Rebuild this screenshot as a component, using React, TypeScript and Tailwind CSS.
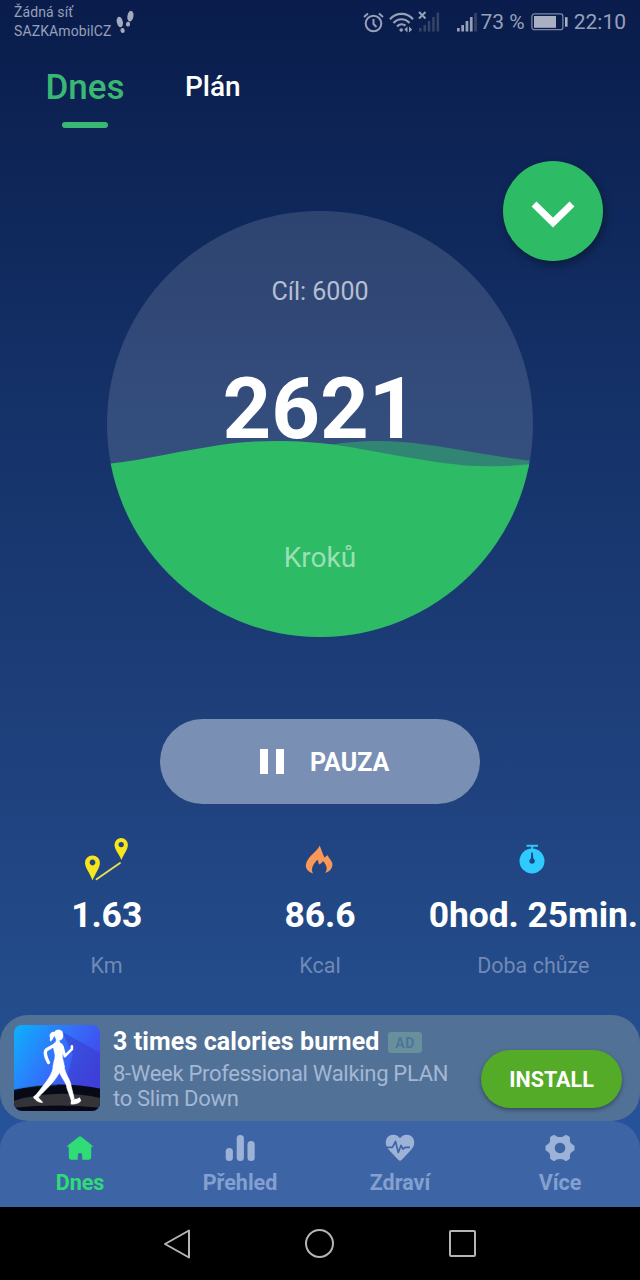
import React from 'react';

const StatusBar = () => {
  return (
    <header className="h-11 pl-[14px] pr-[14px] flex justify-between text-[#97a0b9]">
      <div className="flex pt-[3px]">
        <div className="text-[14px] leading-[19px] tracking-[0.1px]">
          <p>Žádná síť</p>
          <p>SAZKAmobilCZ</p>
        </div>
        <svg width="18" height="24" viewBox="0 0 18 24" fill="#a3abbf" className="ml-[5px] mt-[7px]">
          <ellipse cx="3.8" cy="12" rx="3" ry="5.4" transform="rotate(-12 3.8 12)" />
          <ellipse cx="6.600" cy="20.5" rx="2.1" ry="2.500" transform="rotate(-14 6.6 20.5)" />
          <ellipse cx="14.4" cy="6.200" rx="3" ry="5.4" transform="rotate(10 14.4 6.2)" />
          <ellipse cx="12" cy="14.2" rx="2.1" ry="2.4" transform="rotate(14 12 14.2)" />
        </svg>
      </div>

      <div className="flex items-center text-[21px] leading-none">
        <svg width="21" height="21" viewBox="0 0 21 21" fill="none" stroke="currentColor" strokeWidth="2">
          <circle cx="10.5" cy="11.5" r="7.8" />
          <path d="M10.5 7v5l3 3M1 5l4-3.5M20 5l-4-3.5" />
        </svg>
        <svg width="25" height="21" viewBox="0 0 25 21" fill="none" stroke="currentColor" strokeWidth="2.2" className="ml-[5px]">
          <path d="M1 7.2C7 .2 18 .2 24 7.2M4.5 11c4.5-5 11.5-5 16 0M8 14.5c2.500-2.800 6-2.800 8.500-.8" />
          <circle cx="12.2" cy="18" r="1.8" fill="currentColor" stroke="none" />
          <path d="M18.5 14.5l-3.2 3 3.2 3zM20 14.5l3.2 3-3.2 3z" fill="currentColor" stroke="none" />
        </svg>
        <svg width="22" height="22" viewBox="0 0 22 22" className="ml-[4px]">
          <g fill="#354366">
            <rect x="1" y="17" width="2.5" height="3.5" />
            <rect x="5.5" y="14" width="2.5" height="6.5" />
            <rect x="9.8" y="10" width="2.5" height="10.5" />
            <rect x="14.2" y="6" width="2.5" height="14.5" />
            <rect x="18.6" y="1.5" width="2.5" height="19" />
          </g>
          <path d="M1 1l6.5 6.5M7.500 1L1 7.5" stroke="currentColor" strokeWidth="2" />
        </svg>
        <svg width="22" height="22" viewBox="0 0 22 22" fill="currentColor" className="ml-[16px]">
          <rect x="1" y="17" width="2.7" height="3.5" />
          <rect x="5.3" y="14" width="2.7" height="6.5" />
          <rect x="9.6" y="10" width="2.7" height="10.5" />
          <rect x="13.9" y="6" width="2.7" height="14.5" />
          <rect x="18.2" y="2" width="2.7" height="18.5" fill="#354366" />
        </svg>
        <span className="ml-[3px] whitespace-nowrap">73 %</span>
        <svg width="37" height="18" viewBox="0 0 37 18" className="ml-[6px]">
          <rect x="0.9" y="0.9" width="31" height="15.8" rx="2.5" fill="none" stroke="#7c86a3" strokeWidth="1.3" />
          <rect x="3" y="3" width="22" height="11.8" fill="#a9b0c4" />
          <rect x="34" y="4.2" width="2.6" height="9.5" fill="#a9b0c4" />
        </svg>
        <span className="ml-[6px]">22:10</span>
      </div>
    </header>
  );
};

const Goal = () => {
  return (
    <div className="relative w-[426px] h-[426px] mx-auto rounded-full overflow-hidden bg-white/13">
      <svg width="426" height="426" viewBox="0 0 426 426" className="absolute inset-0">
        <path
          d="M190 242C222 232 245 230 275 230C325 231 365 243 426 250V258H190Z"
          fill="#2cbd66"
          fillOpacity="0.5"
        />
        <path
          d="M0 253C38 249 72 240 113 234C132 231 150 230 170 230C192 230 208 231.500 226 233.500C249 236.500 270 241 293 245C320 249.500 348 255 380 255.300C395 255.300 410 255 426 252.500V426H0Z"
          fill="#2dbb65"
        />
      </svg>
      <div className="relative flex flex-col items-center">
        <p className="mt-[66px] text-[25px] leading-[30px] text-[#b6bfd0]">Cíl: 6000</p>
        <p className="mt-[52px] text-[85px] leading-[100px] font-bold text-white">2621</p>
        <p className="mt-[82px] text-[28px] leading-[34px] text-[#9bdfb6]">Kroků</p>
      </div>
    </div>
  );
};

const RouteIcon = () => (
  <svg width="46" height="46" viewBox="0 0 46 46" fill="#f8e51c" className="mr-[2px]">
    <path
      fillRule="evenodd"
      d="M9.5 18.5a7.3 7.3 0 0 1 7.4 7.3C16.9 31 12 37 9.5 43.5C7.5 37 2 31 2 25.8a7.3 7.3 0 0 1 7.5-7.3zM9.5 22.6a2.9 2.9 0 1 0 .01 0z"
    />
    <path
      fillRule="evenodd"
      d="M38.2 1a6.7 6.7 0 0 1 6.7 6.7C44.9 12.5 40.5 17.5 38.4 23C36.5 17.5 31.5 12.5 31.5 7.7A6.7 6.7 0 0 1 38.2 1zM38.2 4.9a2.7 2.7 0 1 0 .01 0z"
    />
    <path d="M13.5 42.3L37 26" stroke="#eee053" strokeWidth="1.8" strokeLinecap="round" />
  </svg>
);

const FlameIcon = () => (
  <svg width="28" height="29" viewBox="0 0 28 29" fill="#fb9758" className="mr-[2px] mb-[2px]">
    <path d="M14.5 0.5C13.5 6 2 11 .8 20C.5 23.5 3 27 8 28.5C5.8 24 7.5 20 12.3 14.8C13.5 16 13.3 18 14 19.5C15.5 19.4 17 17.5 18 16C22.5 21 22.5 24.5 20.2 28C25 26.5 28 22.5 27.3 18.5C27 15.5 23.8 13.5 22.8 10.2C21.3 10.7 20.5 11.7 19.7 12.8C17.5 9 16.8 5 14.5.5z" />
  </svg>
);

const WatchIcon = () => (
  <svg width="26" height="30" viewBox="0 0 26 30" className="mr-[2px] mb-[2px]">
    <path d="M7.5 1.7h11.5M13.2 1v5" stroke="#31c5fa" strokeWidth="2" />
    <circle cx="13" cy="17" r="12.5" fill="#2fcbff" />
    <path d="M12.300 8.500h1.600l.4 6a2.800 2.800 0 1 1-2.400 0z" fill="#1e4686" />
  </svg>
);

const stats = [
  { value: '1.63', label: 'Km', icon: <RouteIcon /> },
  { value: '86.6', label: 'Kcal', icon: <FlameIcon /> },
  { value: '0hod. 25min.', label: 'Doba chůze', icon: <WatchIcon /> },
];

const Walker = () => (
  <svg width="86" height="86" viewBox="42 62 257 257" className="rounded-[8px] shrink-0">
    <defs>
      <linearGradient id="sky" x1="0" y1="0" x2="1" y2="0.6">
        <stop offset="0" stopColor="#0cb1fd" />
        <stop offset="0.55" stopColor="#356dfa" />
        <stop offset="1" stopColor="#4440e8" />
      </linearGradient>
    </defs>
    <rect x="42" y="62" width="257" height="257" fill="url(#sky)" />
    <path d="M186 82L299 145V260H190L218 150z" fill="#3b3dcb" fillOpacity="0.55" />
    <path d="M42 255Q170 226 299 252V319H42z" fill="#070a16" />
    <path d="M42 288Q170 252 299 280V309Q170 296 42 309z" fill="#333338" />
    <path d="M42 255Q100 241 170 241" fill="none" stroke="#147cd8" strokeWidth="2" />
    <g fill="#fff" stroke="#fff" strokeLinecap="round" strokeLinejoin="round">
      <path d="M164 83C164 74 188 73 188 88C190 98 187 107 178 107L179 115C189 118 191 127 190 136L187 153C186 163 193 173 192 187L160 187C157 175 166 163 164 150L158 123C160 115 169 115 168 105C164 99 163 92 164 83z" strokeWidth="1" />
      <path d="M166 84C158 78 145 88 149 98C151 103 147 107 151 111C160 108 157 100 166 93z" strokeWidth="0" />
      <path d="M163 122L139 136C132 142 137 160 145 174" fill="none" strokeWidth="10" />
      <path d="M187 128L194 155L215 134M215 134L215 126" fill="none" strokeWidth="8" />
      <path d="M159 183C160 207 140 230 106 273L114 279C137 254 160 236 178 204C188 226 200 237 200 250L213 286L222 282L213 246C211 223 193 210 192 183z" strokeWidth="2" />
      <path d="M106 272C98 276 99 280 105 284C110 291 118 294 128 294C129 291 119 286 115 278zM213 283L212 296C211 301 216 299 220 299C230 298 242 293 242 287L238 279C231 284 224 285 213 283z" strokeWidth="1" />
    </g>
  </svg>
);

const AdBanner = () => {
  return (
    <div className="h-[106px] rounded-[28px] bg-[#517197] flex items-center pl-[14px] pr-[18px]">
      <Walker />
      <div className="ml-[13px] flex-1 whitespace-nowrap self-start pt-[12px]">
        <div className="flex items-center h-[30px]">
          <h3 className="w-[267px] font-bold text-[25px] leading-[30px] tracking-[0.1px] text-white">3 times calories burned</h3>
          <span className="ml-[8px] w-[34px] h-[21px] rounded-[3px] bg-[#67909c] text-[#4f7598] text-[14px] leading-[22px] font-bold text-center tracking-[0.5px]">
            AD
          </span>
        </div>
        <p className="mt-[4px] text-[22px] leading-[25px] tracking-[-0.3px] text-[#a3b7d5]">
          8-Week Professional Walking PLAN
          <br />
          to Slim Down
        </p>
      </div>
      <button className="mt-[22px] pt-[2px] w-[141px] h-[58px] shrink-0 rounded-full bg-[#54ab27] text-white text-[21.5px] font-bold shadow-[0_2px_4px_rgba(0,0,0,0.35)]">
        INSTALL
      </button>
    </div>
  );
};

const navItems = [
  {
    label: 'Dnes',
    icon: (
      <svg width="28" height="28" viewBox="0 0 28 28" fill="currentColor">
        <path d="M12.8 2.7Q14 1.7 15.2 2.7L26.3 11.5Q27.4 13 25.5 13.3H25.2V22.8Q25.2 25.7 22.5 25.7H16.2V21Q16 19 14 19Q12 19 11.8 21V25.7H5.5Q2.8 25.7 2.8 22.8V13.3H2.5Q.6 13 1.7 11.5z" />
      </svg>
    ),
  },
  {
    label: 'Přehled',
    icon: (
      <svg width="30" height="28" viewBox="0 0 30 28" fill="currentColor">
        <rect x="0.7" y="14" width="7.2" height="13" rx="3.5" />
        <rect x="11.7" y="1" width="7.2" height="26" rx="3.5" />
        <rect x="22.5" y="7" width="7.2" height="20" rx="3.5" />
      </svg>
    ),
  },
  {
    label: 'Zdraví',
    icon: (
      <svg width="30" height="28" viewBox="0 0 30 28">
        <path d="M15 4.2C18.5-.5 25-.3 28 4C30.5 8.5 29 13 25.5 16.5L16.8 25.8Q15 27.7 13.2 25.8L4.5 16.5C1 13-.5 8.5 2 4C5-.3 11.5-.5 15 4.2z" fill="currentColor" />
        <path d="M1 13.3H7.5L10.5 7.5L13.3 18.5L16 11.5L18 15.2L20 13.3H25" fill="none" stroke="#3d65a5" strokeWidth="1.7" strokeLinejoin="round" />
      </svg>
    ),
  },
  {
    label: 'Více',
    icon: (
      <svg width="30" height="28" viewBox="0 0 30 28" fill="currentColor">
        <path
          fillRule="evenodd"
          d="M8.5 1Q10 .7 11.2 2.2Q15 4 18.8 2.2Q20 .7 21.5 1L24.500 2.800Q25.500 4 24.800 6Q25.300 9.800 28 10.700Q29.500 11.300 29.500 12.500V15.500Q29.500 16.700 28 17.300Q25.300 18.200 24.800 22Q25.500 24 24.500 25L21.500 27Q20 27.300 18.800 25.800Q15 24 11.200 25.800Q10 27.300 8.500 27L5.500 25Q4.500 24 5.200 22Q4.700 18.200 2 17.300Q.5 16.700.5 15.500V12.500Q.5 11.300 2 10.700Q4.700 9.800 5.200 6Q4.500 4 5.500 2.800zM15 8.700a5.300 5.300 0 1 0 .01 0z"
        />
      </svg>
    ),
  },
];

const App = () => {
  return (
    <div className="w-[640px] h-[1280px] flex flex-col overflow-hidden bg-[linear-gradient(180deg,#091c4b_0px,#0d2455_140px,#132f65_350px,#1d3e79_700px,#244c8b_1000px,#25529a_1120px)] font-[Roboto,sans-serif]">
      <StatusBar />

      <nav className="h-[84px] pl-[46px] flex">
        <div className="w-[78px] flex flex-col items-center">
          <span className="mt-[23px] h-[42px] text-[35px] leading-[42px] font-medium text-[#39b874]">Dnes</span>
          <span className="mt-[13px] w-[46px] h-[6px] rounded-full bg-[#39b874]" />
        </div>
        <span className="ml-[61px] mt-[26px] text-[28px] leading-[34px] font-medium text-white">Plán</span>
      </nav>

      <main className="relative h-[887px] pt-[83px]">
        <button className="absolute right-[37px] top-[33px] w-[100px] h-[100px] rounded-full bg-[#2dbb65] flex items-center justify-center shadow-[2px_4px_8px_rgba(0,0,0,0.35)]">
          <svg width="44" height="28" viewBox="0 0 44 28" fill="none" stroke="#fff" strokeWidth="7" className="mt-[7px]">
            <path d="M3 3L22 21.5L41 3" />
          </svg>
        </button>

        <Goal />

        <button className="mt-[82px] mx-auto w-[320px] h-[85px] rounded-full bg-[#7a8fb4] flex items-center pl-[100px] text-white">
          <span className="w-[24px] h-[25px] border-x-[8px] border-white" />
          <span className="ml-[26px] mt-[2px] text-[25px] leading-[30px] font-bold">PAUZA</span>
        </button>

        <div className="mt-[30px] grid grid-cols-3 text-center">
          {stats.map((item) => (
            <div key={item.label} className="flex flex-col items-center">
              <div className="h-[52px] flex items-center">{item.icon}</div>
              <p className="mt-[8px] text-[35.5px] leading-[42px] tracking-[-0.1px] font-bold text-white whitespace-nowrap">
                {item.value}
              </p>
              <p className="mt-[17px] text-[21.5px] leading-[26px] text-[#7089b5]">{item.label}</p>
            </div>
          ))}
        </div>
      </main>

      <AdBanner />

      <nav className="h-[86px] rounded-t-[28px] bg-[#3d65a5] grid grid-cols-4">
        {navItems.map((item, i) => (
          <div
            key={item.label}
            className={`flex flex-col items-center pt-[13px] ${i === 0 ? 'text-[#2fdc76]' : 'text-[#9db2d7]'}`}
          >
            {item.icon}
            <span
              className={`mt-[8px] text-[21.5px] leading-[26px] font-bold ${i === 0 ? '' : 'text-[#83a0d0]'}`}
            >
              {item.label}
            </span>
          </div>
        ))}
      </nav>

      <footer className="h-[73px] bg-black flex items-center justify-between pl-[162px] pr-[164px]">
        <svg width="30" height="32" viewBox="0 0 30 32" fill="none" stroke="#b5b5b5" strokeWidth="2" strokeLinejoin="round">
          <path d="M3 16L27 2.500V29.500z" />
        </svg>
        <span className="mr-[2px] w-[29px] h-[29px] rounded-full border-2 border-[#b5b5b5]" />
        <span className="w-[27px] h-[27px] rounded-[2px] border-2 border-[#b5b5b5]" />
      </footer>
    </div>
  );
};

export default App;
